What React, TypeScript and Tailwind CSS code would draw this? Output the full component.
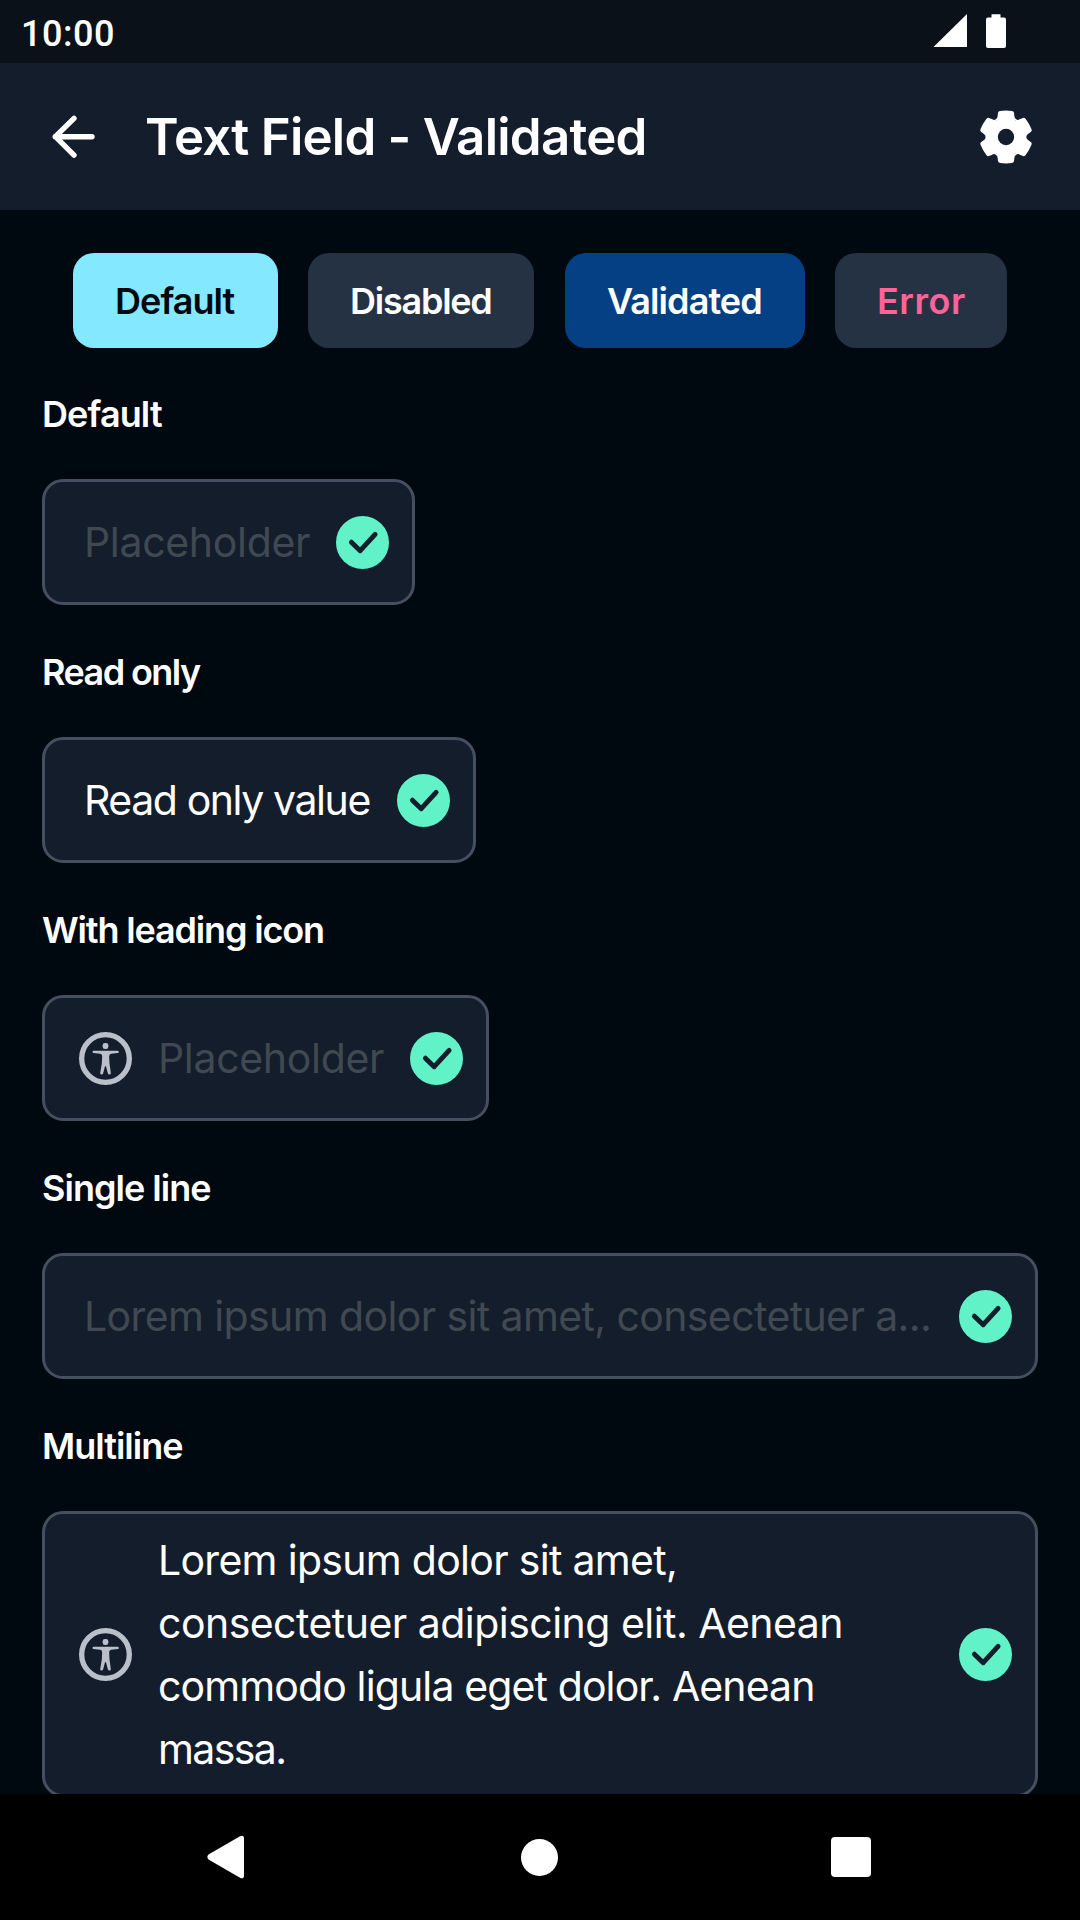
import type { ReactNode } from 'react';

const toothAngles = [0, 60, 120, 180, 240, 300];

function BackIcon() {
  return (
    <svg width="48" height="48" viewBox="0 0 48 48" fill="none" stroke="#fff" strokeWidth="5.4" strokeLinecap="round" strokeLinejoin="round">
      <path d="M43 23.700H6.200M25 5.300L6.400 23.700l18.600 18.400" />
    </svg>
  );
}

function GearIcon() {
  return (
    <svg width="54" height="54" viewBox="-81 -81 162 162">
      <g fill="#fff">
        <circle r="54" />
        {toothAngles.map((angle) => (
          <path
            key={angle}
            transform={`rotate(${angle})`}
            d="M-31 -53Q-25 -55 -25 -64L-24 -73Q-23 -77 -18 -78Q0 -80.5 18 -78Q23 -77 24 -73L25 -64Q25 -55 31 -53L0 0Z"
          />
        ))}
      </g>
      <circle r="24.5" fill="#141d2b" />
    </svg>
  );
}

function CheckIcon() {
  return (
    <svg className="shrink-0" width="53" height="53" viewBox="-26.5 -26.5 53 53">
      <circle r="26.5" fill="#62f2c8" />
      <path d="M-11.1 -.3L-2.3 8.2L12.6 -8.2" fill="none" stroke="#141d2b" strokeWidth="4.9" strokeLinecap="round" strokeLinejoin="round" />
    </svg>
  );
}

function AccessibilityIcon() {
  return (
    <svg className="mr-[25px] shrink-0" width="53" height="53" viewBox="-79.5 -79.5 159 159">
      <circle r="71.5" fill="none" stroke="#bac0ca" strokeWidth="16" />
      <rect x="-8.5" y="-46.5" width="17" height="18" rx="7" fill="#bac0ca" />
      <path
        fill="#bac0ca"
        d="M-37 -23H37Q40 -22.500 40 -19.500Q40 -17 37 -16.500L17 -14Q11 -13 11 -7L12 14L16 44Q16 48 12 48Q8 48 7 44L1.500 23H-1.500L-7 44Q-8 48 -12 48Q-16 48 -16 44L-11 14L-10 -7Q-10 -13 -16 -14L-36 -16.500Q-39 -17 -39 -19.500Q-39 -22.500 -37 -23Z"
      />
    </svg>
  );
}

function Section({ label, tracking, children }: { label: string; tracking: string; children: ReactNode }) {
  return (
    <section className="mb-[45px] flex flex-col items-start">
      <h2 className={`mb-[44px] pt-px text-[36px] leading-[42px] font-semibold text-white ${tracking}`}>{label}</h2>
      {children}
    </section>
  );
}

function Field({ size, leading, children }: { size: string; leading?: boolean; children: ReactNode }) {
  return (
    <div
      className={`flex items-center justify-between rounded-[21px] border-[3px] border-[#444f5f] bg-[#141d2b] pr-[23px] text-[41px] leading-[63px] whitespace-nowrap ${leading ? 'pl-[34px]' : 'pl-[38px]'} ${size}`}
    >
      {leading && <AccessibilityIcon />}
      <div className="flex-1 pt-px pl-px">{children}</div>
      <CheckIcon />
    </div>
  );
}

const tabs = [
  { label: 'Default', style: 'w-[205px] bg-[#84e9ff] text-[#000810] tracking-[-0.95px]' },
  { label: 'Disabled', style: 'w-[226px] bg-[#253244] text-white tracking-[-1.24px]' },
  { label: 'Validated', style: 'ml-px w-[240px] bg-[#054084] text-white tracking-[-0.9px]' },
  { label: 'Error', style: 'w-[172px] bg-[#253244] text-[#ff6398] tracking-[0.54px]' },
];

export default function App() {
  return (
    <div className="flex h-[1920px] w-[1080px] flex-col overflow-hidden bg-[#000810] font-['Inter',sans-serif]">
      <div className="flex h-[63px] shrink-0 items-center justify-between bg-[#0a1119] pr-[74px] pl-[21px]">
        <span className="pt-[5px] font-['Roboto',sans-serif] text-[36px] leading-[42px] font-medium tracking-[0.53px] text-white">10:00</span>
        <svg width="73" height="36" viewBox="0 0 73 36" fill="#fff">
          <path d="M34 0V33H.5Z" />
          <path d="M58.500 .2H67.500V3.500H71Q73 3.500 73 5.500V32Q73 34 71 34H55Q53 34 53 32V5.500Q53 3.500 55 3.500H58.500Z" />
        </svg>
      </div>

      <header className="flex h-[147px] shrink-0 items-center bg-[#141d2b] pr-[47px] pl-[49px]">
        <BackIcon />
        <h1 className="ml-[48px] flex-1 pt-px text-[51px] leading-[60px] font-semibold tracking-[-0.76px] text-white">Text Field - Validated</h1>
        <GearIcon />
      </header>

      <main className="min-h-0 flex-1 overflow-hidden px-[42px] pt-[43px]">
        <nav className="mb-[44px] flex gap-[30px] pl-[31px]">
          {tabs.map((tab) => (
            <button key={tab.label} className={`h-[95px] rounded-[21px] pl-[42px] text-left text-[36px] font-semibold ${tab.style}`}>
              {tab.label}
            </button>
          ))}
        </nav>

        <Section label="Default" tracking="tracking-[-0.9px]">
          <Field size="h-[126px] w-[373px]">
            <span className="tracking-[-0.32px] text-[#404952]">Placeholder</span>
          </Field>
        </Section>
        <Section label="Read only" tracking="tracking-[-1.57px]">
          <Field size="h-[126px] w-[434px]">
            <span className="tracking-[-1.42px] text-white">Read only value</span>
          </Field>
        </Section>
        <Section label="With leading icon" tracking="tracking-[-1.16px]">
          <Field size="h-[126px] w-[447px]" leading>
            <span className="tracking-[-0.32px] text-[#404952]">Placeholder</span>
          </Field>
        </Section>
        <Section label="Single line" tracking="tracking-[-0.98px]">
          <Field size="h-[126px] w-[996px]">
            <span className="tracking-[-0.61px] text-[#404952]">Lorem ipsum dolor sit amet, consectetuer a...</span>
          </Field>
        </Section>
        <Section label="Multiline" tracking="tracking-[-1px]">
          <Field size="h-[286px] w-[996px]" leading>
            <p className="text-white">
              <span className="block tracking-[-0.7px]">Lorem ipsum dolor sit amet,</span>
              <span className="block tracking-[-0.53px]">consectetuer adipiscing elit. Aenean</span>
              <span className="block tracking-[-0.88px]">commodo ligula eget dolor. Aenean</span>
              <span className="block tracking-[-1.6px]">massa.</span>
            </p>
          </Field>
        </Section>
      </main>

      <footer className="flex h-[126px] shrink-0 items-center justify-between bg-black pr-[209px] pl-[207px]">
        <svg width="37" height="44" viewBox="0 0 37 44" fill="#fff">
          <path d="M1.500 19.500L33 1.200Q37 -.5 37 3.500V40.500Q37 44.500 33 42.800L1.500 24.500Q-.8 22 1.500 19.500Z" />
        </svg>
        <div className="mr-[8px] ml-[11px] size-[37px] rounded-full bg-white" />
        <div className="size-[40px] rounded-[4px] bg-white" />
      </footer>
    </div>
  );
}
